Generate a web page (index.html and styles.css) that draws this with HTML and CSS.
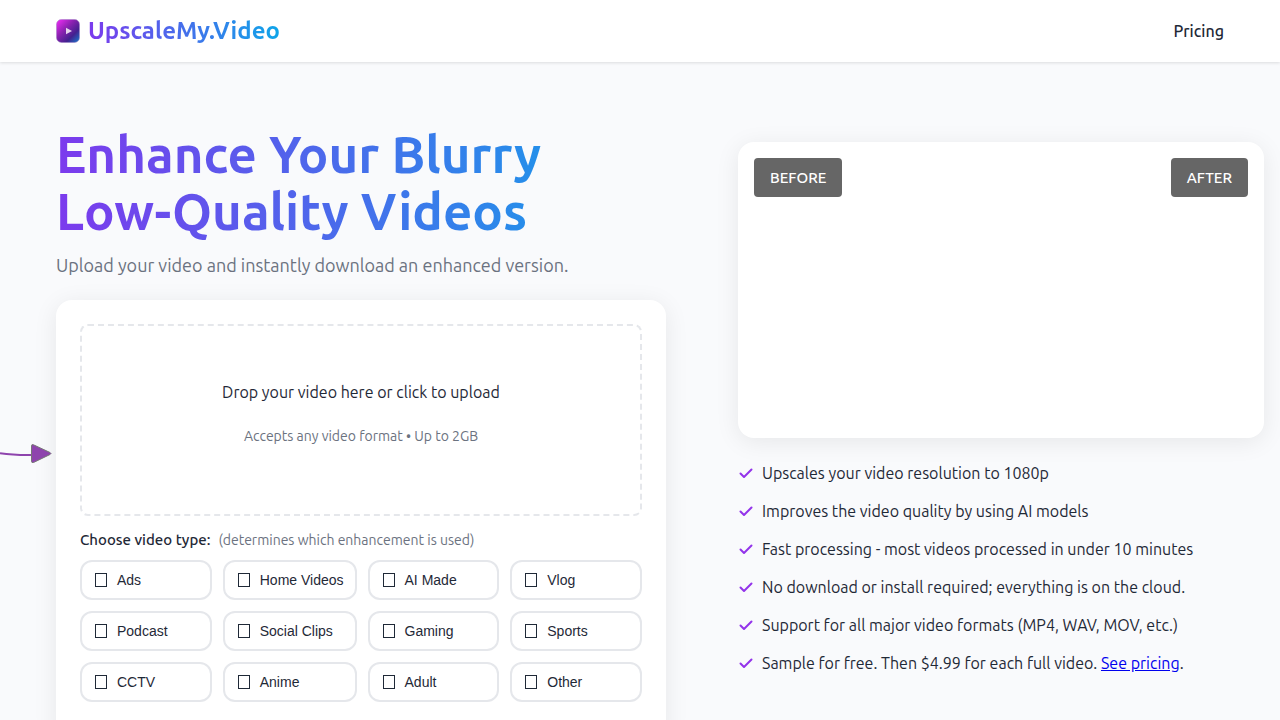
FILE: index.html
```html
<!DOCTYPE html>
<html lang="en">
<head>
<meta charset="utf-8">
<meta name="viewport" content="width=device-width, initial-scale=1">
<title>UpscaleMy.Video</title>
<link rel="stylesheet" href="styles.css">
</head>
<body>
<header class="site-header">
  <a class="brand" href="#">
    <svg class="brand-icon" viewBox="0 0 24 24" aria-hidden="true">
      <defs>
        <linearGradient id="logo" x1="0" y1="0" x2="1" y2="1">
          <stop offset=".05" stop-color="#e82bf0"/>
          <stop offset=".4" stop-color="#8a22b0"/>
          <stop offset=".7" stop-color="#43218f"/>
          <stop offset=".95" stop-color="#1d6fc4"/>
        </linearGradient>
      </defs>
      <rect x=".5" y=".5" width="23" height="23" rx="5" fill="url(#logo)" stroke="#9d7bc4" stroke-opacity=".5"/>
      <path d="M10 8.700l6 3.300-6 3.300z" fill="#e6d5ee"/>
    </svg>
    <span class="brand-name">UpscaleMy.Video</span>
  </a>
  <nav class="nav"><a class="nav-link" href="#pricing">Pricing</a></nav>
</header>
<main class="hero">
  <section class="intro">
    <h1 class="title">Enhance Your Blurry<br>Low-Quality Videos</h1>
    <p class="subtitle">Upload your video and instantly download an enhanced version.</p>
    <div class="upload-card">
      <svg class="arrow" viewBox="0 0 56 24" aria-hidden="true">
        <path d="M0 11.200Q14 13.300 32 13" fill="none" stroke="#8e44ad" stroke-width="2"/>
        <path d="M31.500 4q0-2 2-1.200L50 10.500q2 1 0 2L33.500 20.500q-2 .6-2-1.200z" fill="#8e44ad" stroke="#777" stroke-width="1"/>
      </svg>
      <button class="dropzone" type="button">
        <span class="drop-main">Drop your video here or click to upload</span>
        <span class="drop-note">Accepts any video format • Up to 2GB</span>
      </button>
      <p class="type-label"><strong class="type-title">Choose video type:</strong><span class="type-note">(determines which enhancement is used)</span></p>
      <div class="types">
        <button class="type" type="button"><i class="glyph"></i>Ads</button>
        <button class="type" type="button"><i class="glyph"></i>Home Videos</button>
        <button class="type" type="button"><i class="glyph"></i>AI Made</button>
        <button class="type" type="button"><i class="glyph"></i>Vlog</button>
        <button class="type" type="button"><i class="glyph"></i>Podcast</button>
        <button class="type" type="button"><i class="glyph"></i>Social Clips</button>
        <button class="type" type="button"><i class="glyph"></i>Gaming</button>
        <button class="type" type="button"><i class="glyph"></i>Sports</button>
        <button class="type" type="button"><i class="glyph"></i>CCTV</button>
        <button class="type" type="button"><i class="glyph"></i>Anime</button>
        <button class="type" type="button"><i class="glyph"></i>Adult</button>
        <button class="type" type="button"><i class="glyph"></i>Other</button>
      </div>
    </div>
  </section>
  <section class="showcase">
    <div class="compare"><span class="tag">BEFORE</span><span class="tag">AFTER</span></div>
    <svg class="sprite"><symbol id="check" viewBox="0 0 16 16"><path d="M2.500 8.500l3.500 3.500 7.500-7.500" fill="none" stroke="#9333ea" stroke-width="2" stroke-linecap="round" stroke-linejoin="round"/></symbol></svg>
    <ul class="features">
      <li class="feature"><svg class="check" aria-hidden="true"><use href="#check"/></svg><span>Upscales your video resolution to 1080p</span></li>
      <li class="feature"><svg class="check" aria-hidden="true"><use href="#check"/></svg><span>Improves the video quality by using AI models</span></li>
      <li class="feature"><svg class="check" aria-hidden="true"><use href="#check"/></svg><span>Fast processing - most videos processed in under 10 minutes</span></li>
      <li class="feature"><svg class="check" aria-hidden="true"><use href="#check"/></svg><span>No download or install required; everything is on the cloud.</span></li>
      <li class="feature"><svg class="check" aria-hidden="true"><use href="#check"/></svg><span>Support for all major video formats (MP4, WAV, MOV, etc.)</span></li>
      <li class="feature"><svg class="check" aria-hidden="true"><use href="#check"/></svg><span>Sample for free. Then $4.99 for each full video. <a class="link" href="#pricing">See pricing</a>.</span></li>
    </ul>
  </section>
</main>
</body>
</html>
```
FILE: styles.css
```css
* { box-sizing: border-box; }
body {
  margin: 0;
  background: #f9fafc;
  color: #1f2937;
  font-family: Ubuntu, "Open Sans", "Noto Sans", sans-serif;
  font-size: 16px;
}
.site-header {
  display: flex;
  align-items: center;
  justify-content: space-between;
  padding: 15px 56px;
  background: #fff;
  box-shadow: 0 1px 3px rgba(0, 0, 0, .12);
}
.brand { display: flex; align-items: center; gap: 8px; text-decoration: none; }
.brand-icon { width: 24px; height: 24px; }
.brand-name, .title {
  color: transparent;
  background-image: linear-gradient(90deg, #7c3aed, #0ea5e9);
  -webkit-background-clip: text;
  background-clip: text;
  font-weight: 700;
}
.brand-name { font-size: 24px; line-height: 32px; }
.nav { line-height: 24px; }
.nav-link { color: #1f2937; font-weight: 500; text-decoration: none; }
.hero {
  display: grid;
  grid-template-columns: 610fr 526fr;
  gap: 72px;
  padding: 64px 16px 0 56px;
}
.title { margin: 0; font-size: 51px; line-height: 57px; }
.subtitle { margin: 11px 0 21px; font-size: 18px; line-height: 28px; color: #6b7280; }
.upload-card, .compare {
  background: #fff;
  border-radius: 16px;
  box-shadow: 0 4px 24px rgba(0, 0, 0, .08);
}
.upload-card { position: relative; padding: 24px 24px 40px; }
.arrow { position: absolute; left: -56px; top: 142px; width: 56px; height: 24px; }
.dropzone {
  display: flex;
  flex-direction: column;
  align-items: center;
  gap: 20px;
  width: 100%;
  padding: 54px 24px 66px;
  border: 2px dashed #e5e7eb;
  border-radius: 8px;
  background: none;
  color: inherit;
  font: inherit;
}
.drop-main { line-height: 24px; }
.drop-note { font-size: 14px; line-height: 24px; color: #6b7280; }
.type-label { display: flex; align-items: baseline; gap: 8px; margin: 12px 0 8px; line-height: 24px; }
.type-title { font-size: 15px; font-weight: 500; }
.type-note { font-size: 14px; color: #6b7280; }
.types { display: grid; grid-template-columns: repeat(4, 1fr); gap: 11px; }
.type {
  display: flex;
  align-items: center;
  gap: 10px;
  height: 40px;
  padding: 0 11px 0 12px;
  border: 2px solid #e5e7eb;
  border-radius: 12px;
  background: #fff;
  color: #1f2937;
  font-family: "Liberation Sans", sans-serif;
  font-size: 14px;
  white-space: nowrap;
}
.glyph { width: 12px; height: 14px; margin-left: 1px; border: 1px solid currentColor; }
.showcase { padding-top: 16px; }
.compare {
  display: flex;
  align-items: flex-start;
  justify-content: space-between;
  aspect-ratio: 16 / 9;
  padding: 16px;
}
.tag {
  padding: 8px 16px;
  border-radius: 4px;
  background: #666;
  color: #fff;
  font-size: 15px;
  font-weight: 500;
  line-height: 23px;
}
.sprite { display: none; }
.features { display: grid; gap: 14px; margin: 23px 0 0; padding: 0; list-style: none; }
.feature { display: flex; align-items: center; gap: 8px; line-height: 24px; }
.check { flex: none; width: 16px; height: 16px; }
.link { color: #00e; }
```
